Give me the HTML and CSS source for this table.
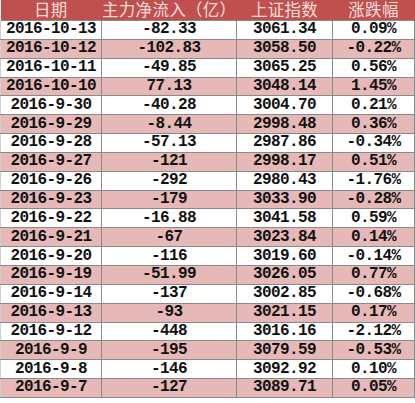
FILE: index.html
```html
<!DOCTYPE html>
<html lang="zh">
<head>
<meta charset="utf-8">
<link rel="stylesheet" href="styles.css">
</head>
<body>
<table class="grid">
  <colgroup>
    <col class="c1"><col class="c2"><col class="c3"><col class="c4">
  </colgroup>
  <thead>
    <tr class="head"><th>日期</th><th>主力净流入（亿）</th><th>上证指数</th><th>涨跌幅</th></tr>
  </thead>
  <tbody>
    <tr><td>2016-10-13</td><td>-82.33</td><td>3061.34</td><td>0.09%</td></tr>
    <tr class="pink"><td>2016-10-12</td><td>-102.83</td><td>3058.50</td><td>-0.22%</td></tr>
    <tr><td>2016-10-11</td><td>-49.85</td><td>3065.25</td><td>0.56%</td></tr>
    <tr class="pink"><td>2016-10-10</td><td>77.13</td><td>3048.14</td><td>1.45%</td></tr>
    <tr><td>2016-9-30</td><td>-40.28</td><td>3004.70</td><td>0.21%</td></tr>
    <tr class="pink"><td>2016-9-29</td><td>-8.44</td><td>2998.48</td><td>0.36%</td></tr>
    <tr><td>2016-9-28</td><td>-57.13</td><td>2987.86</td><td>-0.34%</td></tr>
    <tr class="pink"><td>2016-9-27</td><td>-121</td><td>2998.17</td><td>0.51%</td></tr>
    <tr><td>2016-9-26</td><td>-292</td><td>2980.43</td><td>-1.76%</td></tr>
    <tr class="pink"><td>2016-9-23</td><td>-179</td><td>3033.90</td><td>-0.28%</td></tr>
    <tr><td>2016-9-22</td><td>-16.88</td><td>3041.58</td><td>0.59%</td></tr>
    <tr class="pink"><td>2016-9-21</td><td>-67</td><td>3023.84</td><td>0.14%</td></tr>
    <tr><td>2016-9-20</td><td>-116</td><td>3019.60</td><td>-0.14%</td></tr>
    <tr class="pink"><td>2016-9-19</td><td>-51.99</td><td>3026.05</td><td>0.77%</td></tr>
    <tr><td>2016-9-14</td><td>-137</td><td>3002.85</td><td>-0.68%</td></tr>
    <tr class="pink"><td>2016-9-13</td><td>-93</td><td>3021.15</td><td>0.17%</td></tr>
    <tr><td>2016-9-12</td><td>-448</td><td>3016.16</td><td>-2.12%</td></tr>
    <tr class="pink"><td>2016-9-9</td><td>-195</td><td>3079.59</td><td>-0.53%</td></tr>
    <tr><td>2016-9-8</td><td>-146</td><td>3092.92</td><td>0.10%</td></tr>
    <tr class="pink"><td>2016-9-7</td><td>-127</td><td>3089.71</td><td>0.05%</td></tr>
  </tbody>
</table>
</body>
</html>
```
FILE: styles.css
```css
html, body {
  margin: 0;
  padding: 0;
  background: #ffffff;
}
.grid {
  border-collapse: collapse;
  table-layout: fixed;
  width: 414px;
}
.c1 { width: 101px; }
.c2 { width: 135px; }
.c3 { width: 96px; }
.c4 { width: 82px; }
.grid th, .grid td {
  padding: 0;
  text-align: center;
  white-space: nowrap;
}
.head th {
  height: 20px;
  background: #c0504d;
  color: #f5dede;
  font-family: "Liberation Sans", "Noto Sans CJK SC", sans-serif;
  font-weight: normal;
  font-size: 16.5px;
  letter-spacing: 0.3px;
  line-height: 20px;
  border-right: 1px solid #c0504d;
  vertical-align: middle;
}
.grid td {
  height: 17.85px;
  font-family: "Liberation Mono", monospace;
  font-weight: bold;
  font-size: 16px;
  letter-spacing: -0.6px;
  line-height: 17px;
  color: #111;
  border: 1px solid #8a8a8a;
  overflow: hidden;
}
.grid td:first-child { border-left-color: #d0d0d0; }
.pink td { background: #e6b9b8; }
```
